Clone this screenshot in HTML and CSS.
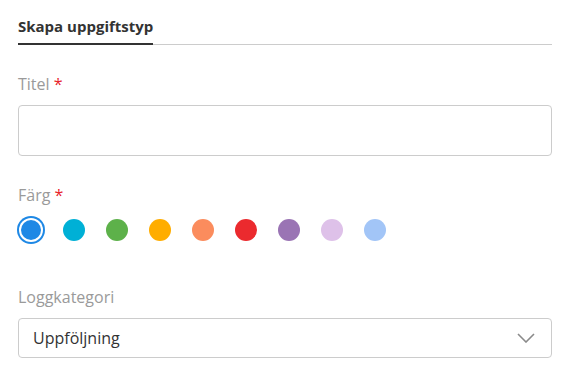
FILE: index.html
```html
<!DOCTYPE html>
<html lang="sv">
<head>
  <meta charset="UTF-8">
  <title>Skapa uppgiftstyp</title>
  <link rel="stylesheet" href="styles.css">
</head>
<body>
  <div class="tabs">
    <div class="tab active">Skapa uppgiftstyp</div>
  </div>

  <div class="field field-title">
    <label class="field-label" for="title">Titel <span class="required">*</span></label>
    <input type="text" id="title" class="text-input">
  </div>

  <div class="field field-color">
    <div class="field-label">Färg <span class="required">*</span></div>
    <div class="colors">
      <span class="swatch selected" style="background-color: #1e88e5"></span>
      <span class="swatch" style="background-color: #00b0d6"></span>
      <span class="swatch" style="background-color: #5db14a"></span>
      <span class="swatch" style="background-color: #ffad00"></span>
      <span class="swatch" style="background-color: #fb8c5d"></span>
      <span class="swatch" style="background-color: #eb2a2e"></span>
      <span class="swatch" style="background-color: #9a74b4"></span>
      <span class="swatch" style="background-color: #dec1e9"></span>
      <span class="swatch" style="background-color: #a2c5f7"></span>
    </div>
  </div>

  <div class="field field-category">
    <div class="field-label">Loggkategori</div>
    <div class="select-box">
      <span>Uppföljning</span>
      <svg width="18" height="10" viewBox="0 0 18 10">
        <path d="M1 1 L9 9 L17 1" fill="none" stroke="#8a8a8a" stroke-width="1.6"/>
      </svg>
    </div>
  </div>
</body>
</html>
```

FILE: styles.css
```css
body {
  margin: 0;
  padding: 16px 18px 0 18px;
  font-family: "Open Sans", Arial, sans-serif;
  background-color: #ffffff;
  color: #333333;
}

.tabs {
  display: flex;
  border-bottom: 1px solid #cccccc;
}

.tab {
  font-size: 15px;
  font-weight: bold;
  color: #333333;
  padding: 0 0 6px 0;
  line-height: 21px;
}

.tab.active {
  border-bottom: 2px solid #333333;
  margin-bottom: -1px;
}

.field-title {
  margin-top: 28px;
}

.field-color {
  margin-top: 28px;
}

.field-color .field-label {
  margin-bottom: 9px;
}

.field-category {
  margin-top: 42px;
}

.field-label {
  display: block;
  font-size: 16px;
  line-height: 22px;
  color: #9a9a9a;
  margin-bottom: 10px;
}

.required {
  color: #e8232b;
}

.text-input {
  display: block;
  box-sizing: border-box;
  width: 100%;
  height: 51px;
  border: 1px solid #cccccc;
  border-radius: 4px;
  margin: 0;
  padding: 0 12px;
  font-family: inherit;
  font-size: 16px;
}

.colors {
  display: flex;
  align-items: center;
  gap: 21px;
  height: 29px;
  padding-left: 3px;
}

.swatch {
  display: block;
  width: 22px;
  height: 22px;
  border-radius: 50%;
  flex-shrink: 0;
}

.swatch.selected {
  box-shadow: 0 0 0 2px #ffffff, 0 0 0 4px #1e88e5;
  width: 20px;
  height: 20px;
  margin: 0 1px 0 0;
}

.select-box {
  box-sizing: border-box;
  height: 40px;
  border: 1px solid #cccccc;
  border-radius: 4px;
  display: flex;
  align-items: center;
  justify-content: space-between;
  padding: 0 16px 0 14px;
  font-size: 16px;
  color: #333333;
}
```
